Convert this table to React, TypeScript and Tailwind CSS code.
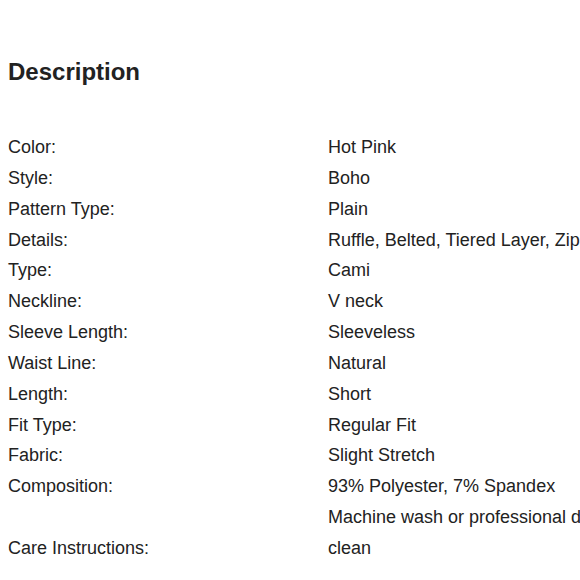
const rows: [string, string][] = [
  ["Color:", "Hot Pink"],
  ["Style:", "Boho"],
  ["Pattern Type:", "Plain"],
  ["Details:", "Ruffle, Belted, Tiered Layer, Zipper"],
  ["Type:", "Cami"],
  ["Neckline:", "V neck"],
  ["Sleeve Length:", "Sleeveless"],
  ["Waist Line:", "Natural"],
  ["Length:", "Short"],
  ["Fit Type:", "Regular Fit"],
  ["Fabric:", "Slight Stretch"],
  ["Composition:", "93% Polyester, 7% Spandex"],
  ["Care Instructions:", "Machine wash or professional dry clean"],
];

export default function App() {
  return (
    <div className="h-[580px] w-[580px] overflow-hidden bg-white font-['Liberation_Sans',Arial,sans-serif] text-[#222]">
      <div className="pl-2 pt-[58px]">
        <h2 className="text-[24px] leading-[28px] font-bold">Description</h2>
        <div className="mt-[46px] grid w-[620px] grid-cols-[320px_300px] items-end text-[18px] leading-[30.85px]">
          {rows.map(([label, value]) => (
            <div className="contents" key={label}>
              <div>{label}</div>
              <div>{value}</div>
            </div>
          ))}
        </div>
      </div>
    </div>
  );
}
